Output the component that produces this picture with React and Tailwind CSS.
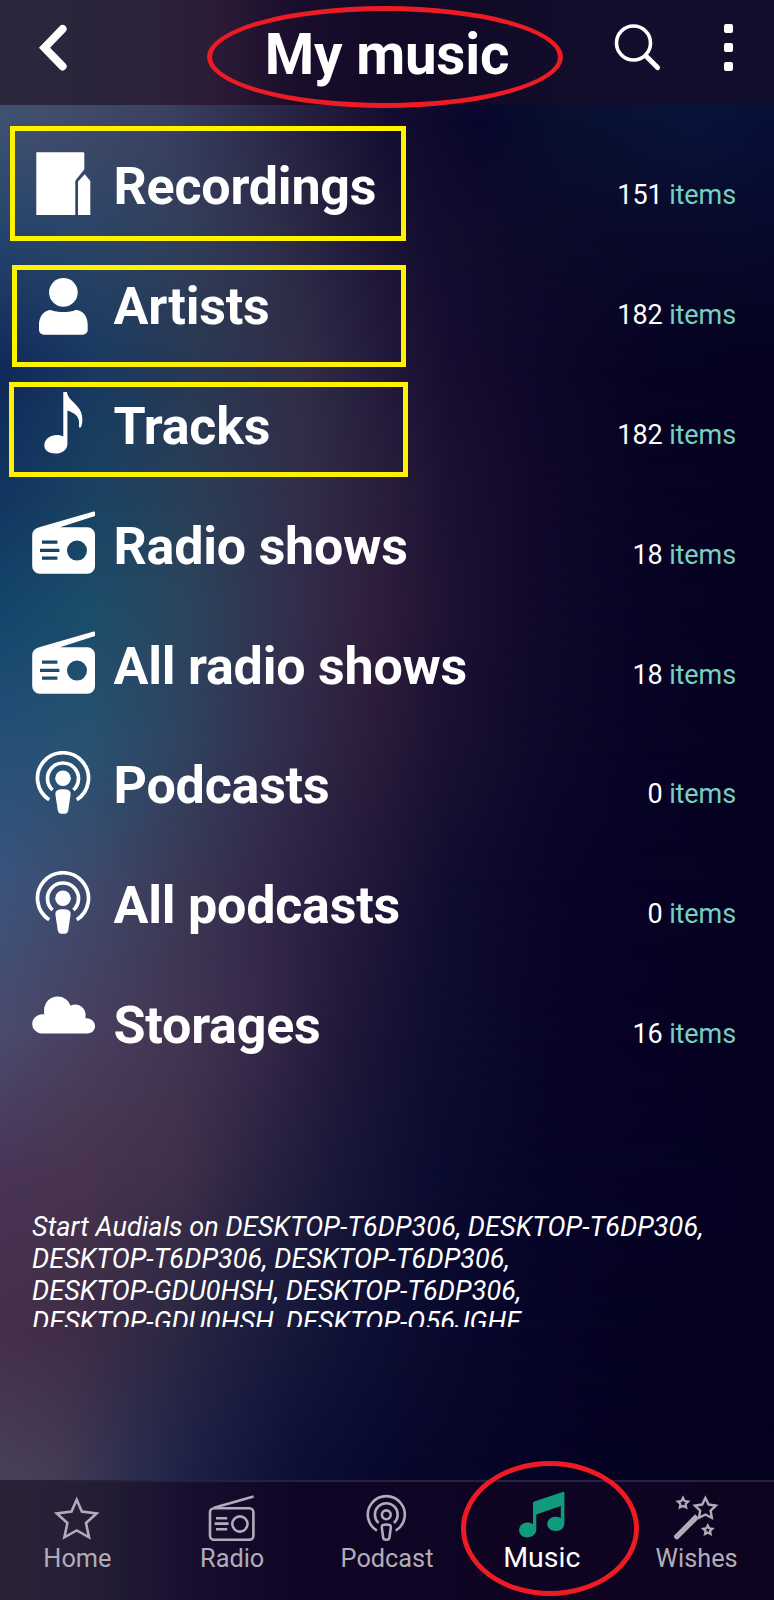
import React from "react";

const backdrop = [
  "bg-[linear-gradient(90deg,#3d5272_0px,#434e6c_40px,#3a4060_170px,#2f3050_240px,#251f3e_310px,#140d31_390px,#08062c_480px,#07102f_560px,#08143a_700px,#060f38_774px)]",
  "bg-[linear-gradient(90deg,#24466d_0px,#2c4567_90px,#323f5b_180px,#2f304b_270px,#1f1737_370px,#140d30_430px,#0d0a2a_520px,#0a0a2b_640px,#080a2c_774px)] [mask-image:linear-gradient(180deg,transparent_120px,black_230px)]",
  "bg-[linear-gradient(90deg,#10295a_0px,#193a60_100px,#2a3852_200px,#312d49_300px,#221939_390px,#160d30_450px,#0e0729_540px,#070322_640px,#050120_774px)] [mask-image:linear-gradient(180deg,transparent_230px,black_370px)]",
  "bg-[linear-gradient(90deg,#12355f_0px,#1b4262_100px,#2a3e56_190px,#322e4a_300px,#281d3b_390px,#1c1132_450px,#10082a_540px,#080324_650px,#05011f_774px)] [mask-image:linear-gradient(180deg,transparent_370px,black_490px)]",
  "bg-[linear-gradient(90deg,#13466a_0px,#1c4d6b_90px,#2b465e_180px,#332f4d_290px,#311c3b_380px,#1d1233_450px,#120a2c_520px,#090325_640px,#05011f_774px)] [mask-image:linear-gradient(180deg,transparent_490px,black_610px)]",
  "bg-[linear-gradient(90deg,#275078_0px,#285271_90px,#304360_180px,#332f4e_270px,#2b1c3a_370px,#1b1233_440px,#0f092b_530px,#080325_640px,#05011f_774px)] [mask-image:linear-gradient(180deg,transparent_610px,black_750px)]",
  "bg-[linear-gradient(90deg,#3a547d_0px,#3e4a6c_90px,#3a3753_190px,#32274a_270px,#22183a_370px,#100d2f_450px,#090428_560px,#05011f_774px)] [mask-image:linear-gradient(180deg,transparent_750px,black_880px)]",
  "bg-[linear-gradient(90deg,#4b4a6c_0px,#493f5e_80px,#433452_180px,#37284a_260px,#1f1738_350px,#0f0d31_430px,#080328_560px,#05011f_774px)] [mask-image:linear-gradient(180deg,transparent_880px,black_1040px)]",
  "bg-[linear-gradient(90deg,#493458_0px,#48344e_80px,#40304a_180px,#2a2341_260px,#191739_340px,#0b0c30_430px,#070428_540px,#050121_774px)] [mask-image:linear-gradient(180deg,transparent_1040px,black_1170px)]",
  "bg-[linear-gradient(90deg,#462e49_0px,#3f2c47_80px,#2c2843_170px,#1d1d3f_250px,#0f1235_350px,#08062b_480px,#050222_620px,#050120_774px)] [mask-image:linear-gradient(180deg,transparent_1170px,black_1330px)]",
  "bg-[linear-gradient(90deg,#48415a_0px,#443c54_60px,#2c2e50_130px,#1b1f45_200px,#0c0e35_300px,#07072c_400px,#050222_600px,#050120_774px)] [mask-image:linear-gradient(180deg,transparent_1330px,black_1480px)]",
];

function Glyph({ children }) {
  return (
    <svg viewBox="0 0 64 64" className="size-16 shrink-0" fill="currentColor">
      {children}
    </svg>
  );
}

const RecordingsIcon = () => (
  <Glyph>
    <path d="M4.3 0.2H51.2Q52.3 0.2 52.3 1.3V17.3L43.3 28.7V63H4.3Z" />
    <path d="M52.7 22.3L58.3 29V63H46V29.5Z" />
  </Glyph>
);

const ArtistIcon = () => (
  <Glyph>
    <circle cx="31.4" cy="20.4" r="14.3" />
    <path d="M19 38C25 40.8 38 40.8 43.5 38C51 38.2 55.7 44.5 55.7 52.5V57.9A4.8 4.8 0 0 1 50.9 62.7H11.8A4.8 4.8 0 0 1 7 57.9V52.5C7 44.5 12 38.2 19 38Z" />
  </Glyph>
);

const TrackIcon = () => (
  <Glyph>
    <path d="M31.3 0.9H35C35.6 10.5 50.4 13.5 50.4 28C50.4 33 49.2 36.8 48 36.8C46.2 36.8 47.8 33 46.6 28.5C45 23 38.5 20.8 35.4 19.6V53C35.4 58.8 30 62.6 23.4 62.6C17 62.6 12.3 59.5 12.3 54.6C12.3 48.5 18 44 25 44C27.5 44 29.7 44.6 31.3 45.6Z" />
  </Glyph>
);

const RadioIcon = () => (
  <Glyph>
    <path
      fillRule="evenodd"
      d="M8 15.9L61.6 0.6Q63 0.3 63 1.6V5L28 16.2H55.5A7.5 7.5 0 0 1 63 23.7V55.2A7.5 7.5 0 0 1 55.5 62.7H7.7A7.5 7.5 0 0 1 0.2 55.2V23.7Q0.2 18 8 15.9ZM45 29.6A10 10 0 1 0 45 49.6A10 10 0 1 0 45 29.6ZM10 29.6V32.8H25.4V29.6ZM8 37.7V41H27.4V37.7ZM10 45.5V48.8H25.4V45.5Z"
    />
  </Glyph>
);

const PodcastIcon = () => (
  <Glyph>
    <g fill="none" stroke="currentColor" strokeWidth="3.7">
      <path d="M17.2 48.7A25.5 25.5 0 1 1 44.8 48.7" />
      <path d="M20.6 39A15.5 15.5 0 1 1 41.4 39" />
    </g>
    <circle cx="31" cy="27.3" r="7.8" />
    <path d="M31 38.2C36 38.2 38.9 39.5 38.6 43.5L36.3 59C35.8 62 34.5 62.8 31 62.8S26.2 62 25.7 59L23.4 43.5C23.1 39.5 26 38.2 31 38.2Z" />
  </Glyph>
);

const CloudIcon = () => (
  <Glyph>
    <path d="M9.5 43.4A9.4 9.4 0 0 1 0.2 34C0.2 28 6 23.4 12.3 24.4C10.5 13.5 17.5 6.6 25.7 6.6C31.5 6.6 36.3 10 38.6 15.8C45.5 11.8 55.5 17.5 53.3 28.2C59 27.6 63 31.5 63 36C63 40.2 60 43.4 55.5 43.4Z" />
  </Glyph>
);

const rows = [
  { label: "Recordings", count: 151, Icon: RecordingsIcon },
  { label: "Artists", count: 182, Icon: ArtistIcon },
  { label: "Tracks", count: 182, Icon: TrackIcon },
  { label: "Radio shows", count: 18, Icon: RadioIcon },
  { label: "All radio shows", count: 18, Icon: RadioIcon },
  { label: "Podcasts", count: 0, Icon: PodcastIcon },
  { label: "All podcasts", count: 0, Icon: PodcastIcon },
  { label: "Storages", count: 16, Icon: CloudIcon },
];

function NavGlyph({ children }) {
  return (
    <svg viewBox="0 0 46 46" className="size-[46px] overflow-visible" fill="none" stroke="currentColor" strokeWidth="2.6">
      {children}
    </svg>
  );
}

function starPoints(cx, cy, r) {
  return Array.from({ length: 10 }, (_, i) => {
    const radius = i % 2 ? r * 0.5 : r;
    const angle = (Math.PI / 5) * i - Math.PI / 2;
    return `${(cx + radius * Math.cos(angle)).toFixed(2)},${(cy + radius * Math.sin(angle)).toFixed(2)}`;
  }).join(" ");
}

const HomeNav = () => (
  <NavGlyph>
    <polygon points="22.7,4.7 27.9,16.6 42.6,18.5 32,28 35,42.3 22.7,35.4 10.4,42.3 13.4,28 2.8,18.5 17.5,16.6" />
  </NavGlyph>
);

const RadioNav = () => (
  <NavGlyph>
    <rect x="1" y="13.2" width="43.4" height="31.6" rx="4" />
    <path d="M5 12.8L44.6 1.6" />
    <circle cx="30.9" cy="29" r="7.6" />
    <path d="M7 23.2H18.2M5.6 28.6H19.6M7 34.2H18.2" />
  </NavGlyph>
);

const PodcastNav = () => (
  <NavGlyph>
    <path d="M12.9 35.6A18.5 18.5 0 1 1 31.7 35.6" />
    <path d="M14.6 28A11.4 11.4 0 1 1 30 28" />
    <circle cx="22.3" cy="19.8" r="4.4" />
    <path d="M22.3 29.5C25.4 29.5 27 30.2 26.8 32.3L25.5 42.4C25.3 44 24.5 44.8 22.3 44.8S19.3 44 19.1 42.4L17.8 32.3C17.6 30.2 19.2 29.5 22.3 29.5Z" />
  </NavGlyph>
);

const MusicNav = () => (
  <NavGlyph>
    <g fill="currentColor" stroke="none">
      <path d="M14 11.2Q14 9.9 15.2 9.4L43.6 -0.1Q45.4 -0.5 45.4 1.2V31C45.4 36 41.5 39 36.7 39C32 39 28.2 36.2 28.2 32C28.2 27.8 32 24.7 36.7 24.7C38.6 24.7 40.4 25.2 41.8 26.2V14L17.3 22.5V37.6C17.3 42.5 13 45.4 8.4 45.4C3.8 45.4 0.1 42.4 0.1 38.2C0.1 33.7 3.8 30.4 8.4 30.4C10.5 30.4 12.5 31 14 32.2Z" />
    </g>
  </NavGlyph>
);

const WishesNav = () => (
  <NavGlyph>
    <path d="M2.8 41.6L20.4 24" strokeWidth="5.4" strokeLinecap="round" />
    <path d="M18.6 25.8L23 21" strokeWidth="5" />
    <polygon points={starPoints(31.4, 14, 11)} strokeWidth="2.4" />
    <polygon points={starPoints(9, 8.2, 5.4)} strokeWidth="2.2" />
    <polygon points={starPoints(33.8, 35.2, 4.8)} strokeWidth="2.2" />
  </NavGlyph>
);

const tabs = [
  { label: "Home", Icon: HomeNav },
  { label: "Radio", Icon: RadioNav },
  { label: "Podcast", Icon: PodcastNav },
  { label: "Music", Icon: MusicNav, active: true },
  { label: "Wishes", Icon: WishesNav },
];

function Header() {
  return (
    <header className="grid h-[105px] grid-cols-[1fr_auto_1fr] items-start bg-[linear-gradient(90deg,#2a273d_0px,#2b233a_140px,#2c1b36_215px,#190d2b_300px,#110925_420px,#120d2c_600px,#120f2d_774px)]">
      <svg viewBox="0 0 40 60" className="mt-[18px] ml-8 h-[60px] w-10" fill="none" stroke="white" strokeWidth="8" strokeLinecap="round" strokeLinejoin="miter">
        <path d="M30.6 11L12.5 29.8L30.6 48.4" />
      </svg>
      <h1 className="mt-[22px] text-[56.5px] leading-[67px] font-bold tracking-[-0.2px]">My music</h1>
      <div className="flex justify-end gap-[59px] pt-[23px] pr-[39px]">
        <svg viewBox="0 0 50 50" className="size-[50px]" fill="none" stroke="white">
          <circle cx="20.5" cy="20" r="17" strokeWidth="3.6" />
          <path d="M33 33L44.5 44.6" strokeWidth="5" strokeLinecap="round" />
        </svg>
        <div className="flex w-[13px] flex-col items-center gap-2.5 pt-px">
          <i className="size-[9px] rounded-[2px] bg-white" />
          <i className="size-[9px] rounded-[2px] bg-white" />
          <i className="size-[9px] rounded-[2px] bg-white" />
        </div>
      </div>
    </header>
  );
}

export default function App() {
  return (
    <div className="relative isolate flex h-[1600px] w-[774px] flex-col overflow-hidden font-['Roboto',sans-serif] text-white">
      <div className="absolute inset-0 -z-10">
        {backdrop.map((layer) => (
          <div key={layer} className={`absolute inset-0 ${layer}`} />
        ))}
      </div>

      <Header />

      <main className="flex-1 pt-[19px]">
        <ul>
          {rows.map(({ label, count, Icon }) => (
            <li key={label} className="flex h-[119.8px] items-center pr-[38px] pl-8">
              <Icon />
              <div className="flex flex-1 items-baseline justify-between pt-[7px] pl-[17.5px]">
                <span className="text-[52px] leading-[60px] font-bold tracking-[-0.22px]">{label}</span>
                <span className="text-[27px] tracking-[-0.1px]">
                  {count} <span className="text-[#76cfc0]">items</span>
                </span>
              </div>
            </li>
          ))}
        </ul>
        <p className="mt-[130px] ml-8 h-[115px] w-[720px] overflow-hidden text-[27px] leading-[31.6px] tracking-[0.07px] whitespace-nowrap italic">
          Start Audials on DESKTOP-T6DP306, DESKTOP-T6DP306,
          <br />
          DESKTOP-T6DP306, DESKTOP-T6DP306,
          <br />
          DESKTOP-GDU0HSH, DESKTOP-T6DP306,
          <br />
          DESKTOP-GDU0HSH, DESKTOP-Q56JGHF
        </p>
      </main>

      <nav className="grid h-[120px] grid-cols-5 border-t-2 border-[#26223c] bg-[linear-gradient(90deg,#2c2238_0px,#231d34_100px,#180f30_190px,#0f0525_300px,#0e031f_774px)]">
        {tabs.map(({ label, Icon, active }) => (
          <a key={label} className={`flex flex-col items-center ${active ? "pt-2.5" : "pt-[13px] text-[#b1adb8]"}`}>
            <span className={active ? "text-[#0f9b7c]" : ""}>
              <Icon />
            </span>
            <span className={active ? "mt-[3px] text-[28.5px] leading-[33px]" : "mt-px text-[25.3px] leading-[33px]"}>{label}</span>
          </a>
        ))}
      </nav>

      <div className="absolute top-[126px] left-[10px] h-[115px] w-[396px] border-5 border-[#fff200]" />
      <div className="absolute top-[265px] left-[12px] h-[102px] w-[394px] border-5 border-[#fff200]" />
      <div className="absolute top-[382px] left-[9px] h-[95px] w-[399px] border-5 border-[#fff200]" />
      <div className="absolute top-[6px] left-[207px] h-[102px] w-[356px] rounded-[50%] border-5 border-[#ed1c24]" />
      <div className="absolute top-[1461px] left-[461px] h-[135px] w-[178px] rounded-[50%] border-5 border-[#ed1c24]" />
    </div>
  );
}
